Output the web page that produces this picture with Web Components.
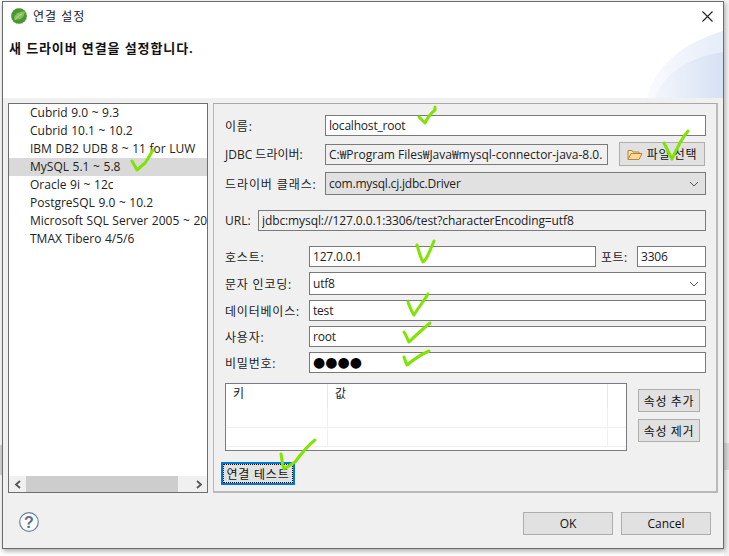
<!DOCTYPE html>
<html lang="ko">
<head>
<meta charset="utf-8">
<title>연결 설정</title>
<style>
  html, body { margin: 0; height: 100%; }
  body { font: 12px "Open Sans", "Noto Sans CJK KR", sans-serif; color: #111; overflow: hidden;
    background:
      linear-gradient(#d8d8d8, #d8d8d8) 0 445px / 2px 30px no-repeat,
      linear-gradient(#dcdcdc, #dcdcdc) right 443px / 5px 27px no-repeat,
      linear-gradient(#f4f4f4, #f4f4f4) right top / 5px 100% no-repeat,
      #fff; }
</style>
</head>
<body>
<conn-dialog>
  <span slot="title">연결 설정</span>
  <span slot="heading">새 드라이버 연결을 설정합니다.</span>
  <driver-list slot="list">
    <driver-item>Cubrid 9.0 ~ 9.3</driver-item>
    <driver-item>Cubrid 10.1 ~ 10.2</driver-item>
    <driver-item>IBM DB2 UDB 8 ~ 11 for LUW</driver-item>
    <driver-item selected>MySQL 5.1 ~ 5.8</driver-item>
    <driver-item>Oracle 9i ~ 12c</driver-item>
    <driver-item>PostgreSQL 9.0 ~ 10.2</driver-item>
    <driver-item>Microsoft SQL Server 2005 ~ 20</driver-item>
    <driver-item>TMAX Tibero 4/5/6</driver-item>
  </driver-list>
  <conn-form slot="form"></conn-form>
</conn-dialog>

<script>
const FONT = `"Open Sans", "Noto Sans CJK KR", sans-serif`;

class ConnDialog extends HTMLElement {
  connectedCallback() {
    this.attachShadow({ mode: 'open' });
    this.shadowRoot.innerHTML = `
      <style>
        :host { display: block; position: absolute; left: 2px; top: 1px; width: 722px; height: 548px; box-sizing: border-box;
          border: 1px solid #6b6b6b; background: #f0f0f0; box-shadow: 1px 2px 5px rgba(0,0,0,.35); }
        .head { height: 96px; background: #fff; position: relative; overflow: hidden; }
        .title { display: flex; align-items: center; gap: 6px; padding: 2px 0 0 8px; height: 24px; font-size: 12px; color: #222; letter-spacing: 1px; }
        .heading { padding: 10px 0 0 6px; font-weight: 700; font-size: 13px; letter-spacing: .9px; color: #111; position: relative; }
        .close { position: absolute; right: 10px; top: 9px; }
        .swoosh { position: absolute; right: 0; bottom: 0; }
        .body { display: flex; gap: 5px; padding: 5px 0 0 5px; height: 395px; box-sizing: border-box; }
        .foot { display: flex; align-items: flex-start; padding: 19px 12px 0 16px; gap: 8px; }
        .help { margin: 0 auto 0 0; }
      </style>
      <div class="head">
        <div class="title">
          <svg width="16" height="16" viewBox="0 0 16 16">
            <circle cx="8" cy="8" r="7.800" fill="#4a9636" stroke="#3f8a2f" stroke-width=".4" stroke-dasharray="1 1"/>
            <path d="M3 10C4 5 9 3 14 3.500c-.5 5-3.500 8.500-8.500 8C4.500 11.500 3.500 11 3 10Z" fill="#84bf58"/>
            <path d="M4 12c2-3 4-5 7-6" stroke="#d2e8b0" stroke-width=".8" fill="none"/>
          </svg>
          <slot name="title"></slot>
        </div>
        <div class="heading"><slot name="heading"></slot></div>
        <svg class="swoosh" width="76" height="67" viewBox="0 0 76 67">
          <defs><linearGradient id="sw" x1="0" y1="0" x2="1" y2="0">
            <stop offset="0" stop-color="#fafbff"/><stop offset="1" stop-color="#e6ecf9"/>
          </linearGradient>
          <linearGradient id="sw2" x1="0" y1="0" x2="1" y2="0">
            <stop offset="0" stop-color="#f3f6fc"/><stop offset="1" stop-color="#d6e1f4"/>
          </linearGradient></defs>
          <path d="M0 67C6 38 34 12 76 0V67Z" fill="url(#sw)"/>
          <path d="M8 67C18 40 44 26 76 21V67Z" fill="url(#sw2)"/>
        </svg>
        <svg class="close" width="11" height="11" viewBox="0 0 11 11"><path d="M.5.500l10 10M10.500.500l-10 10" stroke="#222" stroke-width="1.100"/></svg>
      </div>
      <div class="body">
        <slot name="list"></slot>
        <slot name="form"></slot>
      </div>
      <div class="foot">
        <svg class="help" width="20" height="20" viewBox="0 0 20 20">
          <circle cx="10" cy="10" r="9.300" fill="#fbfcfe" stroke="#6d7f9c" stroke-width="1.200"/>
          <text x="10" y="15.500" text-anchor="middle" font-family="Liberation Sans" font-weight="700" font-size="16" fill="#5d6f8c">?</text>
        </svg>
        <flat-button style="--w:90px;--h:23px">OK</flat-button>
        <flat-button style="--w:90px;--h:23px">Cancel</flat-button>
      </div>
    `;
  }
}

class DriverList extends HTMLElement {
  connectedCallback() {
    this.attachShadow({ mode: 'open' });
    this.shadowRoot.innerHTML = `
      <style>
        :host { display: flex; flex-direction: column; width: 200px; height: 390px; box-sizing: border-box; border: 1px solid #6e6e6e; background: #fff; }
        .items { flex: 1; overflow: hidden; }
        .bar { height: 16px; display: flex; align-items: center; background: #f0f0f0; }
        .arrow { width: 17px; display: flex; justify-content: center; }
        .track { flex: 1; display: flex; }
        .thumb { width: 152px; height: 16px; background: #cdcdcd; }
      </style>
      <div class="items"><slot></slot></div>
      <div class="bar">
        <div class="arrow"><svg width="8" height="9" viewBox="0 0 8 9"><path d="M6 1L2 4.500 6 8" fill="none" stroke="#555" stroke-width="1.800"/></svg></div>
        <div class="track"><div class="thumb"></div></div>
        <div class="arrow"><svg width="8" height="9" viewBox="0 0 8 9"><path d="M2 1l4 3.500L2 8" fill="none" stroke="#555" stroke-width="1.800"/></svg></div>
      </div>
    `;
  }
}

class DriverItem extends HTMLElement {
  connectedCallback() {
    this.attachShadow({ mode: 'open' });
    this.shadowRoot.innerHTML = `
      <style>
        :host { display: block; height: 18px; line-height: 18px; padding-left: 21px; white-space: nowrap; color: #222; word-spacing: .5px; }
        :host([selected]) { background: #d9d9d9; }
      </style>
      <slot></slot>
    `;
  }
}

class FlatButton extends HTMLElement {
  connectedCallback() {
    this.attachShadow({ mode: 'open' });
    this.shadowRoot.innerHTML = `
      <style>
        :host { display: inline-flex; align-items: center; justify-content: center; gap: 4px; box-sizing: border-box;
          width: var(--w, 62px); height: var(--h, 23px); background: #e1e1e1; border: 1px solid #adadad; color: #111; white-space: nowrap; flex: none; }
        :host([focused]) { border: 2px solid #0078d7; outline: 1px dotted #000; outline-offset: -3px; }
      </style>
      <slot></slot>
    `;
  }
}

class TextField extends HTMLElement {
  connectedCallback() {
    const sel = this.hasAttribute('select');
    this.attachShadow({ mode: 'open' });
    this.shadowRoot.innerHTML = `
      <style>
        :host { display: flex; align-items: center; box-sizing: border-box; height: var(--h, 21px); flex: 1; min-width: 0;
          border: 1px solid #7a7a7a; background: #fff; padding: 0 3px; white-space: nowrap; overflow: hidden; color: #222; letter-spacing: var(--ls, -.2px); }
        :host([readonly]) { background: #f0f0f0; }
        :host([select]) { --h: 23px; }
        :host([disabled]) { background: #e1e1e1; }
        .text { flex: 1; overflow: hidden; }
        svg { flex: none; margin-right: 3px; }
      </style>
      <span class="text"><slot></slot></span>
      ${sel ? '<svg width="10" height="6" viewBox="0 0 10 6"><path d="M1 1l4 4 4-4" fill="none" stroke="#555"/></svg>' : ''}
    `;
  }
}

class PropsTable extends HTMLElement {
  connectedCallback() {
    this.attachShadow({ mode: 'open' });
    this.shadowRoot.innerHTML = `
      <style>
        :host { display: grid; grid-template-columns: 102px 1fr 18px; grid-template-rows: 24px 20px 19px; box-sizing: border-box;
          width: 402px; height: 68px; border: 1px solid #7a7a85; background: #fff; }
        div { box-sizing: border-box; padding: 0 0 0 7px; line-height: 20px; border-right: 1px solid #f0f0f0; border-bottom: 1px solid #f0f0f0; }
        .h { border-bottom: 0; border-right-color: #e8e8e8; }
        .end { border-right: 0; }
      </style>
      <div class="h">키</div><div class="h">값</div><div class="h end"></div>
      <div></div><div></div><div class="end"></div>
      <div></div><div></div><div class="end"></div>
    `;
  }
}

class ConnForm extends HTMLElement {
  connectedCallback() {
    this.attachShadow({ mode: 'open' });
    this.shadowRoot.innerHTML = `
      <style>
        :host { display: block; position: relative; width: 505px; height: 390px; box-sizing: border-box; border: 1px solid #b9b9b9; border-bottom-width: 2px; border-right-width: 2px; border-top-color: #a8a8a8; padding: 11px 10px 0 11px; background: #f0f0f0; font-family: ${FONT}; color: #222; }
        .row { display: flex; align-items: center; }
        .lbl { flex: none; width: 100px; white-space: nowrap; letter-spacing: .8px; }
        .narrow { width: 84px; }
        .wide { width: 33px; letter-spacing: 0; }
        .file { gap: 11px; }
        .port { flex: none; width: 36px; margin-left: 5px; white-space: nowrap; letter-spacing: .4px; }
        .props { display: flex; gap: 11px; margin-top: 10px; }
        .side { display: flex; flex-direction: column; gap: 7px; padding-top: 6px; letter-spacing: .6px; }
        .dots { font-size: 14px; letter-spacing: 0; color: #000; font-family: "DejaVu Sans", sans-serif; }
        .test { margin: 11px 0 0 -4px; letter-spacing: .8px; }
        .pick { margin-right: 1px; letter-spacing: .6px; }
        .marks { position: absolute; left: -214px; top: -104px; width: 729px; height: 556px; pointer-events: none; }
        .marks path { fill: none; stroke: #7fe400; stroke-width: 3; stroke-linecap: round; stroke-linejoin: round; }
      </style>
      <div class="row" style="margin-bottom:6px"><span class="lbl">이름:</span><text-field>localhost_root</text-field></div>
      <div class="row file" style="margin-bottom:6px">
        <span class="lbl" style="margin-right:-11px;letter-spacing:0">JDBC 드라이버:</span>
        <text-field readonly style="--ls:0">C:\u20a9Program Files\u20a9Java\u20a9mysql-connector-java-8.0.</text-field>
        <flat-button class="pick" style="--w:86px;--h:24px">
          <svg width="16" height="13" viewBox="0 0 16 13"><path d="M1 11V2.500h4l1 1.500h6v2" fill="#fbe3b0" stroke="#b58539"/><path d="M1 11.500l3-6h11l-3 6Z" fill="#fcd998" stroke="#b58539"/></svg>
          파일 선택
        </flat-button>
      </div>
      <div class="row" style="margin-bottom:15px"><span class="lbl" style="letter-spacing:.9px">드라이버 클래스:</span><text-field select disabled>com.mysql.cj.jdbc.Driver</text-field></div>
      <div class="row" style="margin-bottom:15px"><span class="lbl wide">URL:</span><text-field readonly style="--ls:-.1px">jdbc:mysql://127.0.0.1:3306/test?characterEncoding=utf8</text-field></div>
      <div class="row" style="margin-bottom:5px"><span class="lbl narrow">호스트:</span><text-field>127.0.0.1</text-field><span class="port">포트:</span><text-field style="flex:none;width:69px">3306</text-field></div>
      <div class="row" style="margin-bottom:5px"><span class="lbl narrow">문자 인코딩:</span><text-field select>utf8</text-field></div>
      <div class="row" style="margin-bottom:5px"><span class="lbl narrow">데이터베이스:</span><text-field>test</text-field></div>
      <div class="row" style="margin-bottom:5px"><span class="lbl narrow">사용자:</span><text-field>root</text-field></div>
      <div class="row"><span class="lbl narrow">비밀번호:</span><text-field><span class="dots">●●●●</span></text-field></div>
      <div class="props">
        <props-table></props-table>
        <div class="side"><flat-button>속성 추가</flat-button><flat-button>속성 제거</flat-button></div>
      </div>
      <flat-button class="test" focused style="--w:74px;--h:23px">연결 테스트</flat-button>
      <svg class="marks" viewBox="0 0 729 556">
        <path d="M419 117l6 6c3-6 6-10 10-13v-3"/>
        <path d="M664 143l8 16c5-11 10-21 16-28"/>
        <path d="M417 245c2 6 3 12 6 17 4-2 7-12 11-21"/>
        <path d="M408 302c2 5 3 9 6 13 4-7 10-14 14-21"/>
        <path d="M404 332c2 3 3 6 5 10 6-6 14-13 21-19"/>
        <path d="M404 357c1 3 2 6 3 8 6-5 15-11 22-14"/>
        <path d="M281 454c1 5 1 10 3 15l11-7c6-8 12-16 20-22"/>
        <path d="M132 161l5 9 8-7c3-4 5-8 8-13"/>
      </svg>
    `;
  }
}

// children first so the parents' markup upgrades straight away
customElements.define('driver-item', DriverItem);
customElements.define('driver-list', DriverList);
customElements.define('flat-button', FlatButton);
customElements.define('text-field', TextField);
customElements.define('props-table', PropsTable);
customElements.define('conn-form', ConnForm);
customElements.define('conn-dialog', ConnDialog);
</script>
</body>
</html>
